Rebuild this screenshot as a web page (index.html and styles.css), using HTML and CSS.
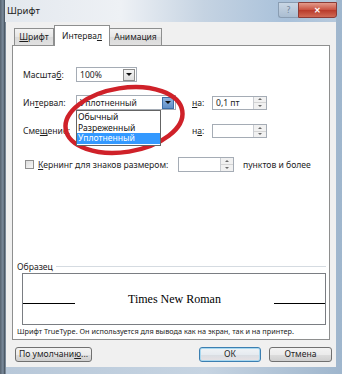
FILE: index.html
```html
<!DOCTYPE html>
<html lang="ru">
<head>
  <meta charset="UTF-8">
  <title>Шрифт</title>
  <link rel="stylesheet" href="styles.css">
</head>
<body>
  <div class="window">
    <div class="titlebar">
      <span class="title">Шрифт</span>
      <span class="cap-help">?</span>
      <span class="cap-close">✕</span>
    </div>

    <div class="client">
      <!-- Tabs -->
      <div class="tabs">
        <span class="tab tab-font"><u>Ш</u>рифт</span>
        <span class="tab tab-spacing active">Интерва<u>л</u></span>
        <span class="tab tab-anim">Анимация</span>
      </div>

      <div class="panel">
        <div class="fields">
          <div class="row row-scale">
            <span class="label">Масшта<u>б</u>:</span>
            <div class="combo combo-scale">
              <span class="combo-text">100%</span>
              <span class="combo-arrow"></span>
            </div>
          </div>

          <div class="row row-spacing">
            <span class="label">Ин<u>т</u>ервал:</span>
            <div class="combo combo-spacing">
              <span class="combo-text">Уплотненный</span>
              <span class="combo-arrow pressed"></span>
              <div class="droplist">
                <div class="drop-item">Обычный</div>
                <div class="drop-item">Разреженный</div>
                <div class="drop-item selected">Уплотненный</div>
              </div>
            </div>
            <span class="by-label"><u>н</u>а:</span>
            <div class="spin">
              <span class="spin-text">0,1 пт</span>
              <span class="spin-btns"><i class="up"></i><i class="down"></i></span>
            </div>
          </div>

          <div class="row row-offset">
            <span class="label">Сме<u>щ</u>ение:</span>
            <span class="combo-spacer"></span>
            <span class="by-label">н<u>а</u>:</span>
            <div class="spin">
              <span class="spin-text"></span>
              <span class="spin-btns"><i class="up"></i><i class="down"></i></span>
            </div>
          </div>

          <div class="row row-kern">
            <div class="kern-label">
              <span class="checkbox"></span>
              <span><u>К</u>ернинг для знаков размером:</span>
            </div>
            <div class="spin spin-kern">
              <span class="spin-text"></span>
              <span class="spin-btns"><i class="up"></i><i class="down"></i></span>
            </div>
            <span class="kern-unit">пунктов и более</span>
          </div>
        </div>

        <div class="sample">
          <div class="sample-head">
            <span>Образец</span>
            <span class="sample-rule"></span>
          </div>
          <div class="preview">
            <span class="preview-line left"></span>
            <span class="preview-text">Times New Roman</span>
            <span class="preview-line right"></span>
          </div>
          <div class="footnote">Шрифт TrueType. Он используется для вывода как на экран, так и на принтер.</div>
        </div>
      </div>

      <div class="buttons">
        <span class="btn btn-default">По умолчани<u>ю</u>...</span>
        <span class="btn btn-ok">ОК</span>
        <span class="btn btn-cancel">Отмена</span>
      </div>
    </div>
  </div>

  <!-- red marker drawn over the screenshot -->
  <svg class="marker" width="342" height="374" viewBox="0 0 342 374">
    <ellipse cx="124" cy="120" rx="59" ry="32" transform="rotate(-9 124 120)"
             fill="none" stroke="#cf2129" stroke-width="4.5"/>
  </svg>
</body>
</html>
```

FILE: styles.css
```css
* {
  box-sizing: border-box;
}
body {
  margin: 0;
  width: 342px;
  height: 374px;
  overflow: hidden;
  position: relative;
  font-family: "Noto Sans", "Liberation Sans", sans-serif;
  font-size: 8.6px;
  color: #1e1e1e;
  background: #a9bdd1;
}
u {
  text-decoration-thickness: 1px;
  text-underline-offset: 1px;
}
.window {
  height: 374px;
  display: flex;
  flex-direction: column;
  padding: 0 6px 7px 6px;
  background: linear-gradient(90deg, #56626f 0, #7c8c9d 3px, #3d4955 5px, #b8c8d9 6px, #c6d4e2 60%, #9fb6cd 100%);
}
.titlebar {
  height: 22px;
  display: flex;
  align-items: center;
  padding-left: 2px;
  margin: 0 0 0 -1px;
  background: linear-gradient(90deg, #e3e8ee 0, #eef1f5 35%, #c5d3e2 60%, #a9c1da 85%, #b6c9dc 100%);
}
.title {
  font-size: 9.5px;
  color: #222;
  margin-top: -1px;
}
.cap-help {
  margin-left: auto;
  align-self: flex-start;
  margin-top: 2px;
  width: 20px;
  height: 16px;
  border: 1px solid #8a9db2;
  border-right: none;
  border-radius: 0 0 0 3px;
  background: linear-gradient(#c9d6e4, #aabdd1);
  color: #6f8196;
  font-size: 8px;
  text-align: center;
  line-height: 14px;
}
.cap-close {
  align-self: flex-start;
  margin-top: 2px;
  margin-right: -1px;
  width: 39px;
  height: 16px;
  border: 1px solid #8c3b36;
  border-radius: 0 0 3px 0;
  background: linear-gradient(#e39b8c, #c9503f 50%, #b83a2a 51%, #d06a55);
  color: #fff;
  font-size: 8px;
  font-weight: bold;
  text-align: center;
  line-height: 14px;
}
.client {
  flex: 1;
  display: flex;
  flex-direction: column;
  padding: 0 6px 5px 6px;
  background: #f0f0f0;
}

/* tabs */
.tabs {
  display: flex;
  align-items: flex-end;
  height: 23px;
  padding-left: 2px;
}
.tab {
  height: 17px;
  border: 1px solid #8e8f8f;
  border-bottom: none;
  background: linear-gradient(#f3f3f3, #e6e6e6 50%, #dadada 51%, #e1e1e1);
  font-size: 8.5px;
  line-height: 15px;
  text-align: center;
  color: #1e1e1e;
}
.tab-font {
  width: 40px;
}
.tab-spacing {
  width: 56px;
}
.tab-anim {
  width: 52px;
}
.tab + .tab {
  border-left: none;
}
.tab.active {
  height: 21px;
  margin-bottom: -1px;
  background: #fff;
  border-left: 1px solid #8e8f8f;
  line-height: 19px;
  position: relative;
  z-index: 1;
}
.panel {
  flex: 1;
  display: flex;
  flex-direction: column;
  border: 1px solid #8e8f8f;
  background: #fff;
}

/* fields */
.fields {
  padding: 21px 0 0 10px;
}
.row {
  display: flex;
  align-items: center;
  height: 15px;
}
.row-scale {
  margin-bottom: 13px;
}
.row-spacing {
  margin-bottom: 14px;
}
.row-offset {
  height: 14px;
  margin-bottom: 19px;
}
.label {
  width: 53px;
}
.combo {
  position: relative;
  height: 15px;
  display: flex;
  align-items: center;
  padding: 0 1px 0 3px;
  border: 1px solid #a5acb5;
  background: #fff;
}
.combo-scale {
  width: 61px;
}
.combo-spacing {
  width: 100px;
}
.combo-spacer {
  width: 100px;
}
.combo-text {
  flex: 1;
}
.combo-arrow {
  width: 12px;
  height: 12px;
  border: 1px solid #8d8d8d;
  background: linear-gradient(#f4f4f4, #dedede);
  display: flex;
  align-items: center;
  justify-content: center;
}
.combo-arrow::after {
  content: "";
  border-left: 3px solid transparent;
  border-right: 3px solid transparent;
  border-top: 3px solid #111;
}
.combo-arrow.pressed {
  border-color: #3c6fa8;
  background: linear-gradient(#8fb5e0, #5f8fc8);
}
.droplist {
  position: absolute;
  top: 14px;
  left: -1px;
  width: 85px;
  padding: 1px 0;
  border: 1px solid #646464;
  background: #fff;
  z-index: 2;
}
.drop-item {
  height: 10.5px;
  line-height: 10.5px;
  padding-left: 1px;
  color: #111;
}
.drop-item.selected {
  background: #3399ff;
  color: #fff;
}
.by-label {
  width: 20px;
  margin-left: 16px;
}
.spin {
  width: 55px;
  height: 14px;
  display: flex;
  border: 1px solid #a5acb5;
  background: #fff;
}
.spin-text {
  flex: 1;
  padding-left: 3px;
  line-height: 12px;
}
.spin-btns {
  width: 13px;
  display: flex;
  flex-direction: column;
  border-left: 1px solid #c9ccd1;
  background: #f1f1f1;
}
.spin-btns i {
  flex: 1;
  display: flex;
  align-items: center;
  justify-content: center;
}
.spin-btns i.up {
  border-bottom: 1px solid #d4d4d4;
}
.spin-btns i.up::after {
  content: "";
  border-left: 2px solid transparent;
  border-right: 2px solid transparent;
  border-bottom: 2px solid #6a6a6a;
}
.spin-btns i.down::after {
  content: "";
  border-left: 2px solid transparent;
  border-right: 2px solid transparent;
  border-top: 2px solid #6a6a6a;
}
.kern-label {
  width: 155px;
  display: flex;
  align-items: center;
}
.checkbox {
  width: 9px;
  height: 9px;
  margin: 0 4px 0 2px;
  border: 1px solid #8f8f8f;
  background: linear-gradient(135deg, #dcdcdc, #f7f7f7);
}
.spin-kern {
  width: 56px;
  height: 15px;
}
.kern-unit {
  margin-left: 9px;
}

/* sample */
.sample {
  margin-top: auto;
  padding: 0 3px 2px 4px;
}
.sample-head {
  display: flex;
  align-items: center;
  height: 11px;
}
.sample-rule {
  flex: 1;
  height: 1px;
  margin-left: 3px;
  background: #d5dbe1;
}
.preview {
  width: 304px;
  height: 52px;
  margin: 1px 0 0 5px;
  display: flex;
  align-items: center;
  border: 1px solid #7a7d82;
  background: #fff;
}
.preview-line {
  height: 1px;
  margin-top: 8px;
  background: #000;
}
.preview-line.left {
  width: 52px;
}
.preview-line.right {
  width: 51px;
}
.preview-text {
  flex: 1;
  text-align: center;
  font-family: "Liberation Serif", serif;
  font-size: 12px;
  color: #000;
}
.footnote {
  height: 11px;
  margin-top: 1px;
  font-size: 7.3px;
  line-height: 11px;
  color: #222;
}

/* bottom buttons */
.buttons {
  display: flex;
  height: 15px;
  margin-top: 7px;
}
.btn {
  height: 15px;
  border: 1px solid #707070;
  border-radius: 3px;
  background: linear-gradient(#f2f2f2, #ebebeb 50%, #dddddd 51%, #cfcfcf);
  text-align: center;
  line-height: 13px;
  color: #1e1e1e;
}
.btn-default {
  width: 77px;
  margin-left: 3px;
}
.btn-ok {
  width: 62px;
  margin-left: auto;
  margin-right: 8px;
  border-color: #3c7fb1;
  box-shadow: inset 0 0 0 1px #a8d8f0;
  background: linear-gradient(#f0f3f6, #e6ebf0 50%, #d8dde3 51%, #e8e2e4);
}
.btn-cancel {
  width: 63px;
  margin-right: -2px;
}
.marker {
  position: absolute;
  top: 0;
  left: 0;
  pointer-events: none;
}
```
